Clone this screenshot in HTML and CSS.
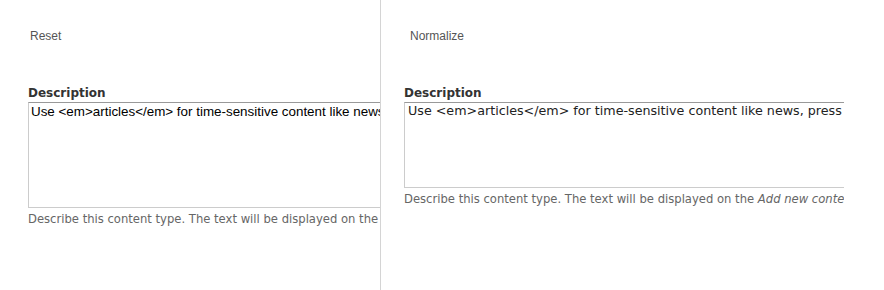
FILE: index.html
```html
<!DOCTYPE html>
<html>
<head>
    <title>Reset vs Normalize</title>
    <link rel="stylesheet" href="styles.css">
</head>
<body>
    <div class="pane reset">
        <p class="caption">Reset</p>
        <div class="form-item">
            <label class="field-label">Description</label>
            <textarea class="field-text">Use &lt;em&gt;articles&lt;/em&gt; for time-sensitive content like news, press releases or blog posts.</textarea>
            <div class="field-help">Describe this content type. The text will be displayed on the <em>Add new content</em> page.</div>
        </div>
    </div>
    <div class="pane normalize">
        <p class="caption">Normalize</p>
        <div class="form-item">
            <label class="field-label">Description</label>
            <textarea class="field-text">Use &lt;em&gt;articles&lt;/em&gt; for time-sensitive content like news, press releases or blog posts.</textarea>
            <div class="field-help">Describe this content type. The text will be displayed on the <em>Add new content</em> page.</div>
        </div>
    </div>
</body>
</html>
```

FILE: styles.css
```css
body {
    margin: 0;
    display: flex;
    height: 290px;
    background-color: #fff;
    font-family: "DejaVu Sans", sans-serif;
}

.pane {
    overflow: hidden;
    white-space: nowrap;
}

.reset {
    width: 352px;
    padding-left: 28px;
    border-right: 1px solid #d4d4d4;
}

.normalize {
    width: 440px;
    padding-left: 23px;
}

.caption {
    margin: 29px 0 0 2px;
    font-family: "Liberation Sans", Arial, sans-serif;
    font-size: 12px;
    color: #555;
}

.normalize .caption {
    margin-left: 6px;
}

.form-item {
    margin-top: 43px;
}

.field-label {
    display: block;
    font-size: 12px;
    font-weight: bold;
    color: #333;
    line-height: 14px;
    margin-bottom: 2px;
}

.field-text {
    display: block;
    width: 520px;
    margin: 0;
    border: 1px solid #ccc;
    border-top-color: #999;
    resize: none;
    overflow: hidden;
    white-space: nowrap;
    color: #000;
    box-sizing: border-box;
}

.reset .field-text {
    height: 106px;
    padding: 1px 2px;
    font-family: "Liberation Sans", Arial, sans-serif;
    font-size: 13.4px;
}

.normalize .field-text {
    height: 86px;
    padding: 0 3px;
    font-family: "DejaVu Sans", sans-serif;
    font-size: 12.7px;
    color: #222;
}

.field-help {
    margin-top: 4px;
    font-size: 11.6px;
    color: #666;
}
```
